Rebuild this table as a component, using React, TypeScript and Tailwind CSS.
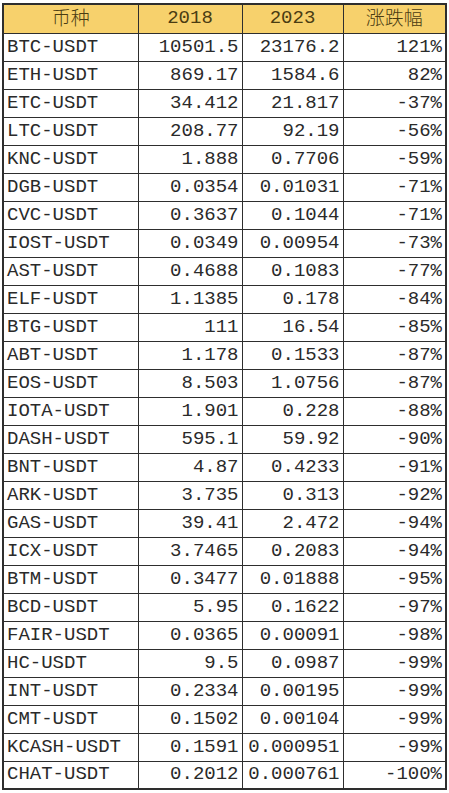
const rows: [string, string, string, string][] = [
  ["BTC-USDT", "10501.5", "23176.2", "121%"],
  ["ETH-USDT", "869.17", "1584.6", "82%"],
  ["ETC-USDT", "34.412", "21.817", "-37%"],
  ["LTC-USDT", "208.77", "92.19", "-56%"],
  ["KNC-USDT", "1.888", "0.7706", "-59%"],
  ["DGB-USDT", "0.0354", "0.01031", "-71%"],
  ["CVC-USDT", "0.3637", "0.1044", "-71%"],
  ["IOST-USDT", "0.0349", "0.00954", "-73%"],
  ["AST-USDT", "0.4688", "0.1083", "-77%"],
  ["ELF-USDT", "1.1385", "0.178", "-84%"],
  ["BTG-USDT", "111", "16.54", "-85%"],
  ["ABT-USDT", "1.178", "0.1533", "-87%"],
  ["EOS-USDT", "8.503", "1.0756", "-87%"],
  ["IOTA-USDT", "1.901", "0.228", "-88%"],
  ["DASH-USDT", "595.1", "59.92", "-90%"],
  ["BNT-USDT", "4.87", "0.4233", "-91%"],
  ["ARK-USDT", "3.735", "0.313", "-92%"],
  ["GAS-USDT", "39.41", "2.472", "-94%"],
  ["ICX-USDT", "3.7465", "0.2083", "-94%"],
  ["BTM-USDT", "0.3477", "0.01888", "-95%"],
  ["BCD-USDT", "5.95", "0.1622", "-97%"],
  ["FAIR-USDT", "0.0365", "0.00091", "-98%"],
  ["HC-USDT", "9.5", "0.0987", "-99%"],
  ["INT-USDT", "0.2334", "0.00195", "-99%"],
  ["CMT-USDT", "0.1502", "0.00104", "-99%"],
  ["KCASH-USDT", "0.1591", "0.000951", "-99%"],
  ["CHAT-USDT", "0.2012", "0.000761", "-100%"],
];

export default function App() {
  return (
    <div className="min-h-screen w-[449px] bg-white pt-[3px] pl-[2px]">
      <table
        className="border-collapse border-2 border-[#2e2e2e] text-[19px] text-[#2a2a2a] leading-none"
        style={{ fontFamily: '"Liberation Mono", "Noto Sans CJK SC", monospace' }}
      >
        <colgroup>
          <col className="w-[135px]" />
          <col className="w-[104px]" />
          <col className="w-[101px]" />
          <col className="w-[103px]" />
        </colgroup>
        <thead>
          <tr className="h-[29px] bg-[#f7d16c] text-[#4a3c12]">
            <th className="border border-[#2e2e2e] font-normal text-center">
              <span style={{ fontFamily: '"Noto Sans CJK SC", sans-serif' }} className="font-light">币种</span>
            </th>
            <th className="border border-[#2e2e2e] font-normal text-center">2018</th>
            <th className="border border-[#2e2e2e] font-normal text-center">2023</th>
            <th className="border border-[#2e2e2e] font-normal text-center">
              <span style={{ fontFamily: '"Noto Sans CJK SC", sans-serif' }} className="font-light">涨跌幅</span>
            </th>
          </tr>
        </thead>
        <tbody>
          {rows.map((r) => (
            <tr key={r[0]} className="h-[28px]">
              <td className="border border-[#2e2e2e] pl-[3px] text-left whitespace-nowrap">{r[0]}</td>
              <td className="border border-[#2e2e2e] pr-[3px] text-right whitespace-nowrap">{r[1]}</td>
              <td className="border border-[#2e2e2e] pr-[3px] text-right whitespace-nowrap">{r[2]}</td>
              <td className="border border-[#2e2e2e] pr-[3px] text-right whitespace-nowrap">{r[3]}</td>
            </tr>
          ))}
        </tbody>
      </table>
    </div>
  );
}
